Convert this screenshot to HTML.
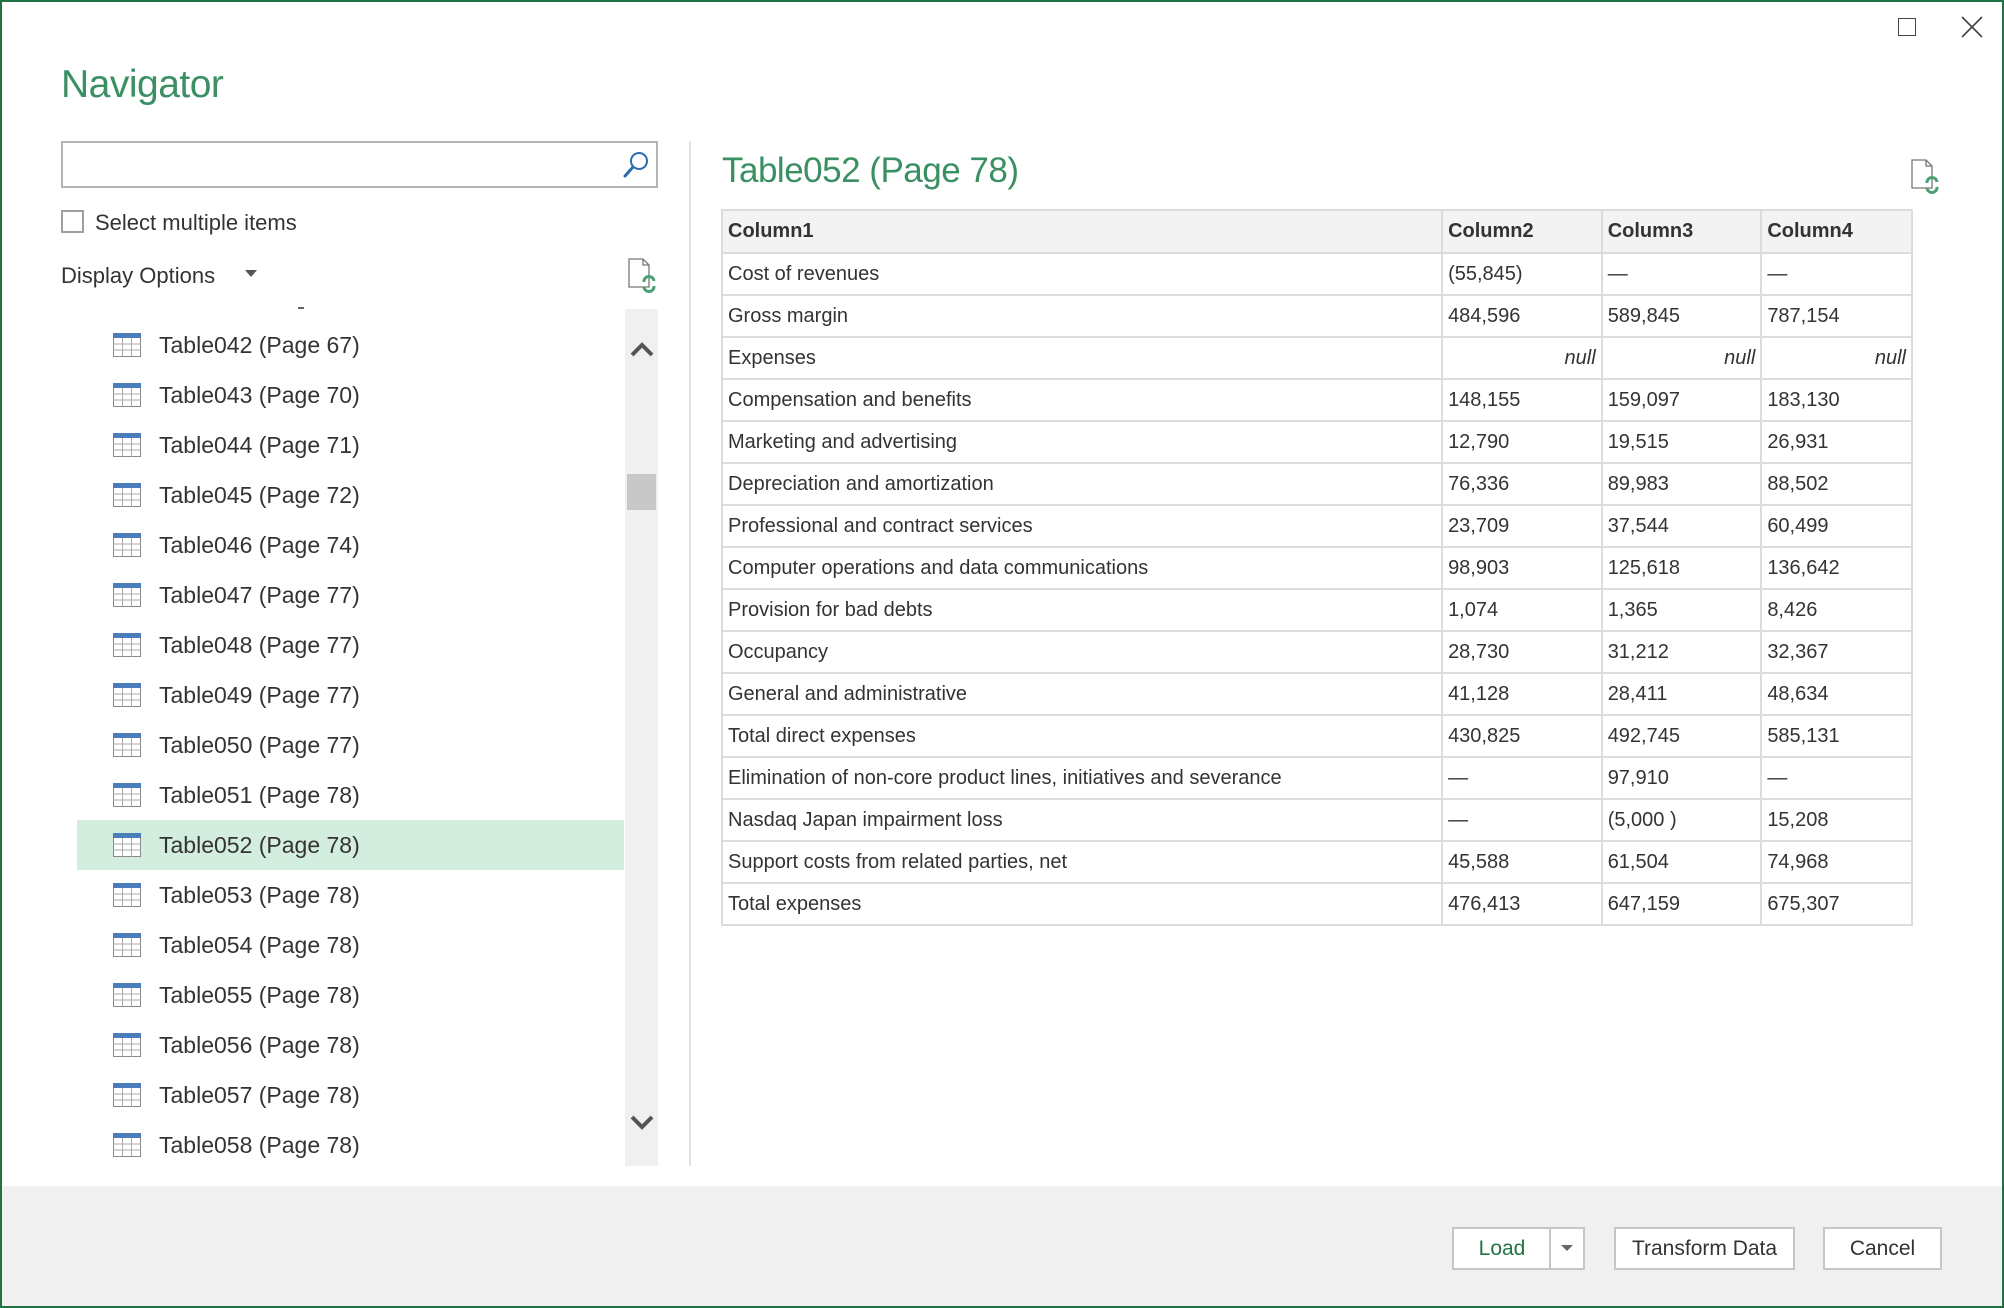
<!DOCTYPE html>
<html><head><meta charset="utf-8"><style>
*{box-sizing:border-box;margin:0;padding:0}
body{width:2004px;height:1308px;background:#fff;font-family:"Liberation Sans",sans-serif;color:#333;position:relative;overflow:hidden}
.frame{position:absolute;left:0;top:0;width:2004px;height:1308px;border:2px solid #217346}
.abs{position:absolute}
.title{font-size:39px;color:#3a8f63;font-weight:normal;letter-spacing:-0.5px}
.row{position:absolute;left:77px;width:547px;height:50px;font-size:23px;color:#333}
.row .ic{position:absolute;left:36px;top:13px}
.row span{position:absolute;left:82px;top:12px;white-space:nowrap}
.sel{background:#d3eedf}
table{border-collapse:collapse;font-size:20px;color:#333}
td{border:2px solid #dcdcdc;height:42px;padding:0 5px;white-space:nowrap}
th{border:2px solid #dcdcdc;height:43px;padding:0 5px;text-align:left;background:#f3f3f3;font-weight:bold}
.n{text-align:right;font-style:italic}
.btn{position:absolute;top:1227px;height:43px;border:2px solid #c6c6c6;background:#fff;font-size:21px;text-align:center;line-height:39px;color:#333}
</style></head><body>
<div class="frame"></div>
<div class="abs" style="left:1898px;top:18px;width:18px;height:18px;border:1.5px solid #444"></div>
<svg class="abs" style="left:1961px;top:16px" width="22" height="22"><path d="M1 1L21 21M21 1L1 21" stroke="#444" stroke-width="1.6"/></svg>

<div class="abs title" style="left:61px;top:63px">Navigator</div>
<div class="abs" style="left:61px;top:141px;width:597px;height:47px;border:2px solid #b4b4b4"></div>
<svg class="abs" style="left:622px;top:150px" width="28" height="30"><circle cx="17" cy="11" r="8" fill="none" stroke="#2b6cb0" stroke-width="2"/><path d="M11 17L3 26" stroke="#2b6cb0" stroke-width="3" stroke-linecap="round"/></svg>
<div class="abs" style="left:61px;top:210px;width:23px;height:23px;border:2px solid #a0a0a0"></div>
<div class="abs" style="left:95px;top:210px;font-size:22px">Select multiple items</div>
<div class="abs" style="left:61px;top:263px;font-size:22px">Display Options</div>
<svg class="abs" style="left:244px;top:268px" width="14" height="10"><path d="M1 2L13 2L7 9Z" fill="#555"/></svg>
<svg class="abs" style="left:625px;top:257px" width="32" height="36"><path d="M4 2H18L24 8V30H4Z" fill="#fff" stroke="#777" stroke-width="1.3"/><path d="M18 2V8H24" fill="none" stroke="#777" stroke-width="1.3"/><g fill="none" stroke="#4aa070" stroke-width="3"><path d="M19 25A5 5 0 0 1 29 24"/><path d="M29 29A5 5 0 0 1 19 30"/></g></svg>
<div class="abs" style="left:298px;top:307px;width:6px;height:2px;background:#666"></div>

<div class="abs" style="left:625px;top:309px;width:33px;height:857px;background:#f0f0f0"></div>
<div class="abs" style="left:627px;top:474px;width:29px;height:36px;background:#c8c8c8"></div>
<svg class="abs" style="left:630px;top:340px" width="24" height="18"><path d="M2 15L12 5L22 15" fill="none" stroke="#555" stroke-width="4"/></svg>
<svg class="abs" style="left:630px;top:1114px" width="24" height="18"><path d="M2 3L12 13L22 3" fill="none" stroke="#555" stroke-width="4"/></svg>

<div id="list"></div>
<div class="abs" style="left:689px;top:141px;width:2px;height:1025px;background:#e1e1e1"></div>

<div class="abs title" style="left:722px;top:151px;font-size:35px">Table052 (Page 78)</div>
<svg class="abs" style="left:1908px;top:158px" width="32" height="36"><path d="M4 2H18L24 8V30H4Z" fill="#fff" stroke="#777" stroke-width="1.3"/><path d="M18 2V8H24" fill="none" stroke="#777" stroke-width="1.3"/><g fill="none" stroke="#4aa070" stroke-width="3"><path d="M19 25A5 5 0 0 1 29 24"/><path d="M29 29A5 5 0 0 1 19 30"/></g></svg>

<table class="abs" style="left:721px;top:209px;width:1192px">
<colgroup><col style="width:721px"><col style="width:160px"><col style="width:160px"><col style="width:151px"></colgroup>
<tr><th>Column1</th><th>Column2</th><th>Column3</th><th>Column4</th></tr>
<tr><td>Cost of revenues</td><td>(55,845)</td><td>—</td><td>—</td></tr>
<tr><td>Gross margin</td><td>484,596</td><td>589,845</td><td>787,154</td></tr>
<tr><td>Expenses</td><td class="n">null</td><td class="n">null</td><td class="n">null</td></tr>
<tr><td>Compensation and benefits</td><td>148,155</td><td>159,097</td><td>183,130</td></tr>
<tr><td>Marketing and advertising</td><td>12,790</td><td>19,515</td><td>26,931</td></tr>
<tr><td>Depreciation and amortization</td><td>76,336</td><td>89,983</td><td>88,502</td></tr>
<tr><td>Professional and contract services</td><td>23,709</td><td>37,544</td><td>60,499</td></tr>
<tr><td>Computer operations and data communications</td><td>98,903</td><td>125,618</td><td>136,642</td></tr>
<tr><td>Provision for bad debts</td><td>1,074</td><td>1,365</td><td>8,426</td></tr>
<tr><td>Occupancy</td><td>28,730</td><td>31,212</td><td>32,367</td></tr>
<tr><td>General and administrative</td><td>41,128</td><td>28,411</td><td>48,634</td></tr>
<tr><td>Total direct expenses</td><td>430,825</td><td>492,745</td><td>585,131</td></tr>
<tr><td>Elimination of non-core product lines, initiatives and severance</td><td>—</td><td>97,910</td><td>—</td></tr>
<tr><td>Nasdaq Japan impairment loss</td><td>—</td><td>(5,000 )</td><td>15,208</td></tr>
<tr><td>Support costs from related parties, net</td><td>45,588</td><td>61,504</td><td>74,968</td></tr>
<tr><td>Total expenses</td><td>476,413</td><td>647,159</td><td>675,307</td></tr>
</table>

<div class="abs" style="left:2px;top:1186px;width:2000px;height:120px;background:#f0f0f0"></div>
<div class="btn" style="left:1452px;width:133px;text-align:left"><span style="display:inline-block;width:96px;text-align:center;color:#217346">Load</span></div>
<div class="abs" style="left:1549px;top:1229px;width:2px;height:39px;background:#c6c6c6"></div>
<svg class="abs" style="left:1560px;top:1244px" width="14" height="8"><path d="M1 1H13L7 7Z" fill="#666"/></svg>
<div class="btn" style="left:1614px;width:181px">Transform Data</div>
<div class="btn" style="left:1823px;width:119px">Cancel</div>

<script>
var names=["Table042 (Page 67)","Table043 (Page 70)","Table044 (Page 71)","Table045 (Page 72)","Table046 (Page 74)","Table047 (Page 77)","Table048 (Page 77)","Table049 (Page 77)","Table050 (Page 77)","Table051 (Page 78)","Table052 (Page 78)","Table053 (Page 78)","Table054 (Page 78)","Table055 (Page 78)","Table056 (Page 78)","Table057 (Page 78)","Table058 (Page 78)"];
var ic='<svg class="ic" width="28" height="24"><rect x="0.5" y="0.5" width="27" height="23" fill="#fff" stroke="#888"/><rect x="0" y="0" width="28" height="5" fill="#4a7ebb"/><path d="M0 11H28M0 17H28M9.5 5V24M18.5 5V24" stroke="#aaa" stroke-width="1"/></svg>';
var h='';names.forEach(function(n,i){h+='<div class="row'+(i==10?' sel':'')+'" style="top:'+(320+i*50)+'px">'+ic+'<span>'+n+'</span></div>';});
document.getElementById('list').innerHTML=h;
</script>
</body></html>
